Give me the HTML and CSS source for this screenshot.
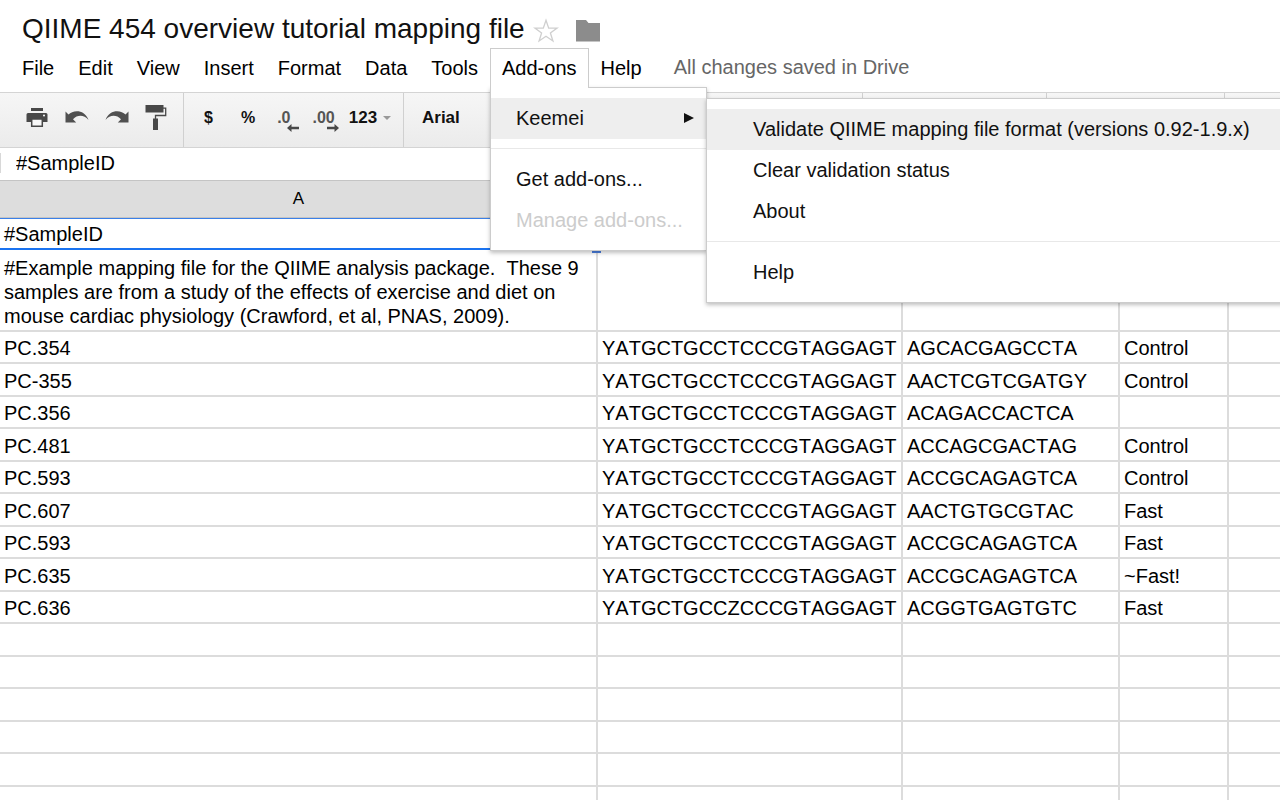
FILE: index.html
```html
<!DOCTYPE html>
<html lang="en">
<head>
<meta charset="utf-8">
<title>QIIME 454 overview tutorial mapping file</title>
<link rel="stylesheet" href="styles.css">
</head>
<body>
<div class="app">
  <header class="header">
    <div class="title-row">
      <h1 class="title">QIIME 454 overview tutorial mapping file</h1>
      <button class="icon-button star" aria-label="Star">
        <svg width="26" height="26" viewBox="0 0 26 26"><path d="M13 2.200l2.700 7.900h8.400l-6.700 4.900 2.500 8-6.900-4.800-6.900 4.800 2.500-8-6.700-4.900h8.400z" fill="#fff" stroke="#cfcfcf" stroke-width="1.300"/></svg>
      </button>
      <button class="icon-button" aria-label="Move to folder">
        <svg width="26" height="24" viewBox="0 0 26 24"><path d="M1 1h10l2.500 3H25v18.500H1z" fill="#8c8c8c"/></svg>
      </button>
    </div>
    <nav class="menubar">
      <button class="menu-button">File</button>
      <button class="menu-button">Edit</button>
      <button class="menu-button">View</button>
      <button class="menu-button">Insert</button>
      <button class="menu-button">Format</button>
      <button class="menu-button">Data</button>
      <button class="menu-button">Tools</button>
      <div class="menu-holder">
        <button class="menu-button open" aria-expanded="true">Add-ons</button>
        <div class="menu addons">
          <div class="submenu-holder">
            <button class="menu-item active" aria-expanded="true">Keemei
              <svg width="10" height="10" viewBox="0 0 10 10"><path d="M0 0l10 5-10 5z" fill="#111"/></svg>
            </button>
            <div class="menu submenu">
              <button class="menu-item active">Validate QIIME mapping file format (versions 0.92-1.9.x)</button>
              <button class="menu-item">Clear validation status</button>
              <button class="menu-item">About</button>
              <hr class="menu-line">
              <button class="menu-item">Help</button>
            </div>
          </div>
          <hr class="menu-line">
          <button class="menu-item">Get add-ons...</button>
          <button class="menu-item" disabled>Manage add-ons...</button>
        </div>
      </div>
      <button class="menu-button">Help</button>
      <span class="save-state">All changes saved in Drive</span>
    </nav>
  </header>

  <div class="toolbar">
    <div class="group group-edit">
      <button class="tool" aria-label="Print">
        <svg width="24" height="26" viewBox="0 0 24 26"><g fill="#484848"><path d="M6 3h12v3H6z"/><path d="M3 8h18q1.500 0 1.500 1.500V17H18v-3H6v3H1.500V9.500Q1.500 8 3 8z"/></g><circle cx="19" cy="10.500" r="1" fill="#fff"/><path d="M6.700 14h10.600v7.300H6.700z" fill="#f8f8f8" stroke="#484848" stroke-width="1.500"/></svg>
      </button>
      <button class="tool" aria-label="Undo">
        <svg width="24" height="26" viewBox="0 0 24 26"><path d="M.500 6.500l3 3C8 5 19.500 4 23.500 15 19 9.500 12.500 9.500 8 14.200l3.200 3.300H.500z" fill="#505050"/></svg>
      </button>
      <button class="tool" aria-label="Redo">
        <svg width="24" height="26" viewBox="0 0 24 26"><path d="M23.500 6.500l-3 3C16 5 4.500 4 .500 15 5 9.500 11.500 9.500 16 14.200l-3.200 3.300h10.700z" fill="#505050"/></svg>
      </button>
      <button class="tool" aria-label="Paint format">
        <svg width="24" height="26" viewBox="0 0 24 26"><path d="M.500 0h18v7.500H.500zM8 13.500h5V25H8z" fill="#484848"/><path d="M18 3.200h2.700v7.300H10.500v4" fill="none" stroke="#484848" stroke-width="1.300"/></svg>
      </button>
    </div>
    <div class="group group-number">
      <button class="tool">$</button>
      <button class="tool percent">%</button>
      <button class="tool decimal" aria-label="Decrease decimal places">.0
        <svg class="arrow arrow-out" width="12" height="8" viewBox="0 0 12 8"><path d="M0 4l4.500-4v2.800H12v2.400H4.500V8z" fill="#484848"/></svg>
      </button>
      <button class="tool decimal more" aria-label="Increase decimal places">.00
        <svg class="arrow" width="12" height="8" viewBox="0 0 12 8"><path d="M12 4L7.500 0v2.800H0v2.400h7.500V8z" fill="#484848"/></svg>
      </button>
      <button class="tool format">123
        <svg width="8" height="4" viewBox="0 0 8 4"><path d="M0 0h8L4 4z" fill="#999"/></svg>
      </button>
    </div>
    <div class="group group-font"><button class="tool font">Arial</button></div>
    <div class="group group-style"></div>
    <div class="group group-align"></div>
    <div class="group"></div>
  </div>

  <div class="formula-bar"><input class="formula" aria-label="Formula" value="#SampleID"></div>

  <table class="sheet">
    <colgroup><col class="col-a"><col class="col-b"><col class="col-c"><col class="col-d"><col></colgroup>
    <thead><tr><th>A</th><th>B</th><th>C</th><th>D</th><th>E</th></tr></thead>
    <tbody>
      <tr class="first"><td class="selected">#SampleID</td><td></td><td></td><td></td><td></td></tr>
      <tr class="note"><td>#Example mapping file for the QIIME analysis package.&nbsp; These 9 samples are from a study of the effects of exercise and diet on mouse cardiac physiology (Crawford, et al, PNAS, 2009).</td><td></td><td></td><td></td><td></td></tr>
      <tr><td>PC.354</td><td>YATGCTGCCTCCCGTAGGAGT</td><td>AGCACGAGCCTA</td><td>Control</td><td></td></tr>
      <tr><td>PC-355</td><td>YATGCTGCCTCCCGTAGGAGT</td><td>AACTCGTCGATGY</td><td>Control</td><td></td></tr>
      <tr><td>PC.356</td><td>YATGCTGCCTCCCGTAGGAGT</td><td>ACAGACCACTCA</td><td></td><td></td></tr>
      <tr><td>PC.481</td><td>YATGCTGCCTCCCGTAGGAGT</td><td>ACCAGCGACTAG</td><td>Control</td><td></td></tr>
      <tr><td>PC.593</td><td>YATGCTGCCTCCCGTAGGAGT</td><td>ACCGCAGAGTCA</td><td>Control</td><td></td></tr>
      <tr><td>PC.607</td><td>YATGCTGCCTCCCGTAGGAGT</td><td>AACTGTGCGTAC</td><td>Fast</td><td></td></tr>
      <tr><td>PC.593</td><td>YATGCTGCCTCCCGTAGGAGT</td><td>ACCGCAGAGTCA</td><td>Fast</td><td></td></tr>
      <tr><td>PC.635</td><td>YATGCTGCCTCCCGTAGGAGT</td><td>ACCGCAGAGTCA</td><td>~Fast!</td><td></td></tr>
      <tr><td>PC.636</td><td>YATGCTGCCZCCCGTAGGAGT</td><td>ACGGTGAGTGTC</td><td>Fast</td><td></td></tr>
      <tr><td></td><td></td><td></td><td></td><td></td></tr>
      <tr><td></td><td></td><td></td><td></td><td></td></tr>
      <tr><td></td><td></td><td></td><td></td><td></td></tr>
      <tr><td></td><td></td><td></td><td></td><td></td></tr>
      <tr><td></td><td></td><td></td><td></td><td></td></tr>
      <tr><td></td><td></td><td></td><td></td><td></td></tr>
    </tbody>
  </table>
</div>
</body>
</html>
```
FILE: styles.css
```css
* { box-sizing: border-box; }
body { margin: 0; background: #fff; color: #000; font: 20px/24px "Liberation Sans", Arial, sans-serif; }
button, input { margin: 0; padding: 0; border: 0; background: none; color: inherit; font: inherit; }
svg { display: block; flex: none; }
.app { height: 100vh; overflow: hidden; }

.header { padding-bottom: 4px; }
.title-row { display: flex; align-items: center; height: 48px; padding: 10px 22px 0; }
.title { margin: 0; font-size: 28px; line-height: 36px; font-weight: 400; color: #111; white-space: nowrap; }
.icon-button { padding-top: 4px; }
.star { margin: 0 16px 0 8px; }

.menubar { display: flex; padding-left: 10px; white-space: nowrap; }
.menu-button { height: 40px; padding: 0 11px 2px; border: 1px solid transparent; border-bottom: 0; }
.menu-holder { position: relative; z-index: 5; }
.menu-button.open { position: relative; z-index: 2; border-color: #ccc; background: #fff; }
.save-state { padding: 7px 0 0 20px; color: #666; }

.menu { position: absolute; padding: 10px 0 9px; border: 1px solid #ccc; background: #fff; box-shadow: 0 2px 4px rgba(0, 0, 0, .25); }
.addons { top: 39px; left: 0; width: 217px; }
.submenu-holder { position: relative; }
.submenu { top: 0; left: 215px; }
.menu-item { display: flex; align-items: center; justify-content: space-between; width: 100%; height: 41px; padding: 0 12px 2px 25px; text-align: left; color: #111; }
.submenu .menu-item { padding: 0 46px 2px; }
.menu-item.active { background: #eee; }
.menu-item:disabled { color: #ccc; }
.menu-line { height: 1px; margin: 9px 0 10px; border: 0; background: #e8e8e8; }

.toolbar { display: flex; height: 56px; border-top: 1px solid #d4d4d4; border-bottom: 1px solid #d4d4d4; background: linear-gradient(#f6f6f6, #ebebeb); }
.group { display: flex; align-items: center; padding-bottom: 4px; border-right: 1px solid #d0d0d0; }
.group:last-child { flex: 1; border-right: 0; }
.group-edit { width: 184px; padding-left: 25px; gap: 16px; }
.group-number { width: 220px; padding-left: 20px; }
.group-font { width: 459px; padding-left: 18px; }
.group-style { width: 184px; }
.group-align { width: 178px; }
.tool { flex: none; font-size: 17px; font-weight: 700; color: #111; }
.group-number .tool { display: flex; align-items: center; margin-right: 28px; font-size: 16px; }
.group-number .percent { margin-right: 22px; }
.group-number .decimal { position: relative; margin-right: 22px; color: #555; }
.group-number .more { margin-right: 14px; }
.group-number .format { gap: 6px; margin: 0; font-size: 17px; }
.arrow { position: absolute; right: -4px; bottom: -2px; }
.arrow-out { right: -9px; }

.formula-bar { height: 32px; padding: 5px 0 7px; }
.formula { display: block; width: 100%; height: 20px; padding-left: 15px; border-left: 1px solid #d8d8d8; }

.sheet { width: 100%; table-layout: fixed; border-collapse: separate; border-spacing: 0; }
.col-a { width: 598px; }
.col-b { width: 305px; }
.col-c { width: 217px; }
.col-d { width: 109px; }
th { height: 38px; padding: 0; border: solid #c4c4c4; border-width: 1px 1px 1px 0; background: #ddd; font-size: 17px; font-weight: 400; }
td { height: 32px; padding: 0 4px 2px; border: solid #dcdcdc; border-width: 0 2px 2px 0; line-height: 24px; vertical-align: bottom; font-kerning: none; }
td:last-child { border-right: 0; }
tr:nth-child(even) td { height: 33px; }
.sheet .first td { height: 32px; }
.sheet .note td { height: 82px; }
.sheet .selected { border-top: 1px solid #3b80e8; border-bottom: 2px solid #1a73f0; position: relative; }
.selected::after { content: ""; position: absolute; z-index: 1; right: -5px; bottom: -5px; width: 9px; height: 9px; background: #4a7fe0; }
```
